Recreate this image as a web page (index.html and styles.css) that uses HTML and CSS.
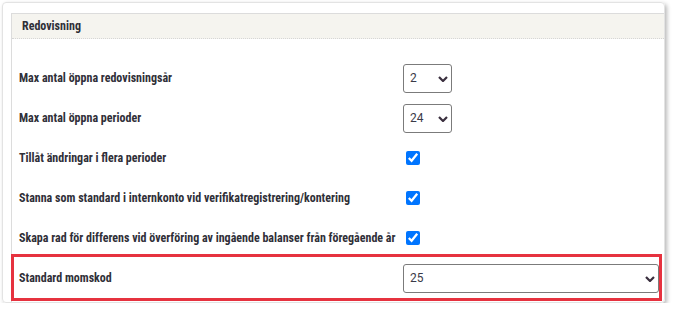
FILE: index.html
```html
<!DOCTYPE html>
<html lang="sv">
<head>
  <meta charset="UTF-8">
  <title>Redovisning</title>
  <link rel="stylesheet" href="styles.css">
</head>
<body>
  <div class="frame">
    <div class="panel">
      <div class="panel-head">Redovisning</div>
      <div class="panel-body">
        <div class="row">
          <label>Max antal öppna redovisningsår</label>
          <div class="select small">
            <select><option>2</option></select>
            <svg viewBox="0 0 10 6" width="10" height="6"><polyline points="1,1 5,5 9,1"/></svg>
          </div>
        </div>
        <div class="row">
          <label>Max antal öppna perioder</label>
          <div class="select small">
            <select><option>24</option></select>
            <svg viewBox="0 0 10 6" width="10" height="6"><polyline points="1,1 5,5 9,1"/></svg>
          </div>
        </div>
        <div class="row">
          <label>Tillåt ändringar i flera perioder</label>
          <div><input type="checkbox" checked></div>
        </div>
        <div class="row">
          <label>Stanna som standard i internkonto vid verifikatregistrering/kontering</label>
          <div><input type="checkbox" checked></div>
        </div>
        <div class="row">
          <label>Skapa rad för differens vid överföring av ingående balanser från föregående år</label>
          <div><input type="checkbox" checked></div>
        </div>
        <div class="row marked">
          <label>Standard momskod</label>
          <div class="select wide">
            <select><option>25</option></select>
            <svg viewBox="0 0 10 6" width="10" height="6"><polyline points="1,1 5,5 9,1"/></svg>
          </div>
        </div>
      </div>
    </div>
  </div>
</body>
</html>
```

FILE: styles.css
```css
body {
  margin: 0;
  background: #fff;
  font-family: "Liberation Sans Narrow", "Roboto Condensed", "DejaVu Sans Condensed", sans-serif;
  color: #2f2f38;
}
.frame {
  box-sizing: border-box;
  margin: 2px 0 0 2px;
  width: 663px;
  height: 301px;
  border: 1px solid #e3e3e3;
  border-radius: 4px;
  box-shadow: 2px 2px 4px rgba(0,0,0,0.28);
  padding: 10px 0 0 8px;
  overflow: hidden;
}
.panel {
  border: 1px solid #dcdcdc;
  margin-right: -1px;
  height: 320px;
}
.panel-head {
  height: 24px;
  line-height: 24px;
  padding-left: 10px;
  background: #f5f4ef;
  border-bottom: 1px dotted #d6d6d6;
  font-weight: bold;
  font-size: 12px;
}
.panel-body {
  padding: 19px 5px 0 7px;
}
.row {
  display: grid;
  grid-template-columns: 384px 1fr;
  align-items: center;
  height: 40px;
}
.row label {
  font-weight: bold;
  font-size: 12px;
}
.row input[type="checkbox"] {
  width: 14px;
  height: 14px;
  margin: 0 0 0 3px;
  display: block;
}
.select {
  position: relative;
  height: 29px;
}
.select.small {
  width: 49px;
}
.select select {
  appearance: none;
  box-sizing: border-box;
  width: 100%;
  height: 29px;
  border: 1px solid #7b7b7b;
  border-radius: 3px;
  background: #fff;
  padding: 0 0 0 6px;
  font-family: Roboto, sans-serif;
  font-size: 12px;
  color: #3a3a48;
}
.select svg {
  position: absolute;
  right: 4px;
  top: 12px;
  fill: none;
  stroke: #3a2f3e;
  stroke-width: 2.2;
}
.row.marked {
  position: relative;
}
.row.marked::after {
  content: "";
  position: absolute;
  top: -4px;
  bottom: -3px;
  left: -8px;
  right: -3px;
  border: 3px solid #e6323f;
  pointer-events: none;
}
```
